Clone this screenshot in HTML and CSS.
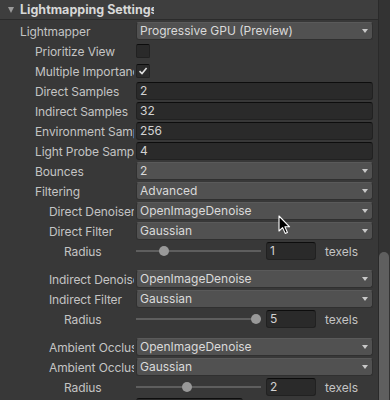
FILE: index.html
```html
<!DOCTYPE html>
<html lang="en">
<head>
    <meta charset="UTF-8">
    <title>Lightmapping Settings</title>
    <link rel="stylesheet" href="styles.css">
</head>
<body>
    <div class="window">
        <div class="inspector">
            <!-- Cabeçalho da seção -->
            <div class="header">
                <span class="foldout"></span>
                <span class="title">Lightmapping Settings</span>
            </div>

            <div class="rows">
                <div class="row">
                    <span class="label l0">Lightmapper</span>
                    <div class="dropdown">Progressive GPU (Preview)</div>
                </div>
                <div class="row">
                    <span class="label l1">Prioritize View</span>
                    <div class="checkbox"></div>
                </div>
                <div class="row">
                    <span class="label l1">Multiple Importance Sampling</span>
                    <div class="checkbox">
                        <svg width="10" height="10" viewBox="0 0 10 10"><path d="M1.5 5.2 L4 7.6 L8.6 2" fill="none" stroke="#e0e0e0" stroke-width="1.6"/></svg>
                    </div>
                </div>
                <div class="row">
                    <span class="label l1">Direct Samples</span>
                    <div class="textfield">2</div>
                </div>
                <div class="row">
                    <span class="label l1">Indirect Samples</span>
                    <div class="textfield">32</div>
                </div>
                <div class="row">
                    <span class="label l1">Environment Samples</span>
                    <div class="textfield">256</div>
                </div>
                <div class="row">
                    <span class="label l1">Light Probe Sample Multiplier</span>
                    <div class="textfield">4</div>
                </div>
                <div class="row">
                    <span class="label l1">Bounces</span>
                    <div class="dropdown">2</div>
                </div>
                <div class="row">
                    <span class="label l1">Filtering</span>
                    <div class="dropdown">Advanced</div>
                </div>

                <!-- Direct -->
                <div class="row">
                    <span class="label l2">Direct Denoiser</span>
                    <div class="dropdown">OpenImageDenoise</div>
                </div>
                <div class="row">
                    <span class="label l2">Direct Filter</span>
                    <div class="dropdown">Gaussian</div>
                </div>
                <div class="row">
                    <span class="label l3">Radius</span>
                    <div class="slider">
                        <div class="track"><div class="range"><span class="thumb" style="left: 20%"></span></div></div>
                        <div class="numfield">1</div>
                        <span class="unit">texels</span>
                    </div>
                </div>

                <!-- Indirect -->
                <div class="row group">
                    <span class="label l2">Indirect Denoiser</span>
                    <div class="dropdown">OpenImageDenoise</div>
                </div>
                <div class="row">
                    <span class="label l2">Indirect Filter</span>
                    <div class="dropdown">Gaussian</div>
                </div>
                <div class="row">
                    <span class="label l3">Radius</span>
                    <div class="slider">
                        <div class="track"><div class="range"><span class="thumb" style="left: 100%"></span></div></div>
                        <div class="numfield">5</div>
                        <span class="unit">texels</span>
                    </div>
                </div>

                <!-- Ambient Occlusion -->
                <div class="row group">
                    <span class="label l2">Ambient Occlusion Denoiser</span>
                    <div class="dropdown">OpenImageDenoise</div>
                </div>
                <div class="row">
                    <span class="label l2">Ambient Occlusion Filter</span>
                    <div class="dropdown">Gaussian</div>
                </div>
                <div class="row">
                    <span class="label l3">Radius</span>
                    <div class="slider">
                        <div class="track"><div class="range"><span class="thumb" style="left: 40%"></span></div></div>
                        <div class="numfield">2</div>
                        <span class="unit">texels</span>
                    </div>
                </div>
                <div class="row">
                    <span class="label l1"></span>
                    <div class="textfield short"></div>
                </div>
            </div>
        </div>

        <div class="scrollbar">
            <div class="scroll-thumb"></div>
        </div>

        <!-- Ponteiro do mouse -->
        <svg class="cursor" width="13" height="20" viewBox="0 0 13 20">
            <path d="M1 1 L1 16 L4.6 12.6 L7.2 18.4 L9.4 17.4 L6.9 11.8 L11.6 11.8 Z" fill="#000" stroke="#fff" stroke-width="1.1" stroke-linejoin="round"/>
        </svg>
    </div>
</body>
</html>
```

FILE: styles.css
```css
/* Reset básico */
* {
    margin: 0;
    padding: 0;
    box-sizing: border-box;
}

body {
    font-family: 'Inter', 'Noto Sans', sans-serif;
    font-size: 12px;
    background-color: #383838;
    color: #c4c4c4;
}

.window {
    position: relative;
    display: flex;
    width: 390px;
    height: 400px;
    overflow: hidden;
}

.inspector {
    width: 378px;
    flex-shrink: 0;
}

/* Cabeçalho */
.header {
    height: 20px;
    display: flex;
    align-items: center;
    background-color: #3e3e3e;
    border-bottom: 1px solid #2b2b2b;
}

.foldout {
    width: 0;
    height: 0;
    margin-left: 8px;
    margin-right: 6px;
    border-left: 3.5px solid transparent;
    border-right: 3.5px solid transparent;
    border-top: 6px solid #9a9a9a;
}

.title {
    width: 134px;
    overflow: hidden;
    white-space: nowrap;
    font-weight: 700;
    font-size: 12.5px;
    color: #d8d8d8;
}

.rows {
    padding-top: 1px;
}

.row {
    height: 20px;
    display: flex;
    align-items: center;
}

.row.group {
    margin-top: 8px;
}

.label {
    width: 134px;
    margin-right: 2px;
    flex-shrink: 0;
    overflow: hidden;
    white-space: nowrap;
    letter-spacing: -0.1px;
}

.l0 { padding-left: 20px; }
.l1 { padding-left: 35px; }
.l2 { padding-left: 49px; }
.l3 { padding-left: 64px; }

/* Campos */
.dropdown {
    position: relative;
    flex: 1;
    height: 18px;
    line-height: 16px;
    margin-right: 5px;
    padding-left: 3px;
    background-color: #515151;
    border: 1px solid #303030;
    border-top-color: #5a5a5a;
    border-radius: 3px;
    color: #dadada;
}

.dropdown::after {
    content: '';
    position: absolute;
    right: 4px;
    top: 6px;
    border-left: 3.5px solid transparent;
    border-right: 3.5px solid transparent;
    border-top: 4px solid #c8c8c8;
}

.textfield {
    flex: 1;
    height: 18px;
    line-height: 16px;
    margin-right: 5px;
    padding-left: 3px;
    background-color: #2a2a2a;
    border: 1px solid #212121;
    border-top-color: #0d0d0d;
    border-radius: 3px;
    color: #d2d2d2;
}

.textfield.short {
    flex: none;
    width: 107px;
}

.checkbox {
    width: 14px;
    height: 14px;
    display: flex;
    align-items: center;
    justify-content: center;
    background-color: #2a2a2a;
    border: 1px solid #212121;
    border-top-color: #0d0d0d;
    border-radius: 2px;
}

/* Slider */
.slider {
    flex: 1;
    display: flex;
    align-items: center;
}

.track {
    width: 125px;
    height: 2px;
    margin-right: 5px;
    background-color: #5e5e5e;
}

.range {
    position: relative;
    height: 2px;
    margin: 0 5px;
}

.thumb {
    position: absolute;
    top: -4px;
    width: 10px;
    height: 10px;
    border-radius: 50%;
    background-color: #999999;
    transform: translateX(-5px);
}

.numfield {
    width: 50px;
    height: 18px;
    line-height: 16px;
    padding-left: 3px;
    background-color: #2a2a2a;
    border: 1px solid #212121;
    border-top-color: #0d0d0d;
    border-radius: 3px;
    color: #d2d2d2;
}

.unit {
    margin-left: 9px;
}

/* Barra de rolagem */
.scrollbar {
    width: 12px;
    flex-shrink: 0;
    background-color: #333333;
    border-left: 1px solid #2a2a2a;
}

.scroll-thumb {
    width: 10px;
    height: 160px;
    margin-top: 252px;
    background-color: #5f5f5f;
    border-radius: 5px 5px 0 0;
}

.cursor {
    position: absolute;
    left: 278px;
    top: 215px;
}
```
